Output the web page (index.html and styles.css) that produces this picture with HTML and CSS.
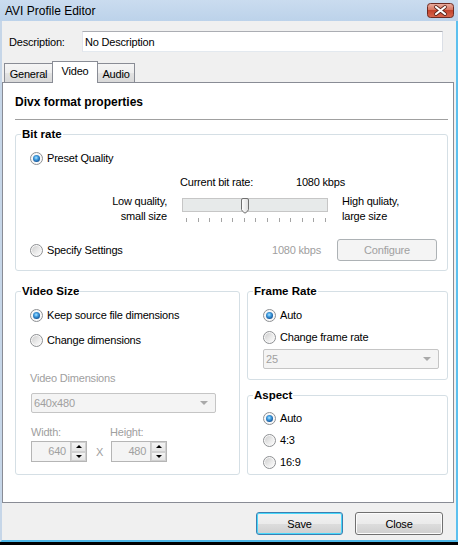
FILE: index.html
```html
<!DOCTYPE html>
<html>
<head>
<meta charset="utf-8">
<title>AVI Profile Editor</title>
<link rel="stylesheet" href="styles.css">
</head>
<body>
<div class="window">
  <div class="titlebar">
    <span class="title">AVI Profile Editor</span>
    <svg class="close-btn" width="27" height="15" viewBox="0 0 27 15">
      <defs>
        <linearGradient id="cg" x1="0" y1="0" x2="0" y2="1">
          <stop offset="0" stop-color="#eab0a3"/>
          <stop offset="0.45" stop-color="#d77661"/>
          <stop offset="0.5" stop-color="#c4432c"/>
          <stop offset="1" stop-color="#d9684f"/>
        </linearGradient>
      </defs>
      <rect x="0.5" y="0.5" width="26" height="14" rx="3" fill="url(#cg)" stroke="#6e2b22"/>
      <path d="M9 4 L18 11 M18 4 L9 11" stroke="#5a241b" stroke-width="3.8" stroke-linecap="round"/>
      <path d="M9 4 L18 11 M18 4 L9 11" stroke="#ffffff" stroke-width="2.2" stroke-linecap="round"/>
    </svg>
  </div>
  <div class="client">
    <div class="desc-row">
      <span class="desc-label">Description:</span>
      <div class="desc-input">No Description</div>
    </div>
    <div class="tabs">
      <div class="tab tab-general">General</div>
      <div class="tab tab-video active">Video</div>
      <div class="tab tab-audio">Audio</div>
    </div>
    <div class="panel">
      <div class="heading">Divx format properties</div>
      <div class="divider"></div>

      <div class="group bitrate">
        <span class="legend">Bit rate</span>
        <div class="radio-row"><span class="radio on"></span><span>Preset Quality</span></div>
        <div class="current-row"><span class="current-label">Current bit rate:</span><span>1080 kbps</span></div>
        <div class="slider-row">
          <div class="slider-left">Low quality,<br>small size</div>
          <div class="slider">
            <div class="track"></div>
            <svg class="thumb" width="8" height="16" viewBox="0 0 8 16">
              <defs>
                <linearGradient id="tg" x1="0" y1="0" x2="1" y2="0">
                  <stop offset="0" stop-color="#ffffff"/>
                  <stop offset="1" stop-color="#dcdcdc"/>
                </linearGradient>
              </defs>
              <path d="M0.5 2 Q0.5 0.5 2 0.5 H6 Q7.5 0.5 7.5 2 V11.5 Q7.5 13 4 15.2 Q0.5 13 0.5 11.5 Z" fill="url(#tg)" stroke="#707070"/>
            </svg>
            <div class="ticks">
              <i></i><i></i><i></i><i></i><i></i><i></i><i></i><i></i><i></i><i></i><i></i><i></i><i></i>
            </div>
          </div>
          <div class="slider-right">High quliaty,<br>large size</div>
        </div>
        <div class="specify-row">
          <span class="radio"></span><span class="radio-text">Specify Settings</span>
          <span class="kbps">1080 kbps</span>
          <div class="btn disabled configure">Configure</div>
        </div>
      </div>

      <div class="row2">
        <div class="group vsize">
          <span class="legend">Video Size</span>
          <div class="radio-row"><span class="radio on"></span><span>Keep source file dimensions</span></div>
          <div class="radio-row second"><span class="radio"></span><span>Change dimensions</span></div>
          <div class="gray-label vd-label">Video Dimensions</div>
          <div class="select vd-select"><span>640x480</span><span class="arrow"></span></div>
          <div class="wh-labels"><span class="w-label">Width:</span><span>Height:</span></div>
          <div class="spin-row">
            <div class="spin"><div class="spin-field">640</div><div class="spin-btns"><span class="up"></span><span class="down"></span></div></div>
            <span class="x-sep">X</span>
            <div class="spin"><div class="spin-field">480</div><div class="spin-btns"><span class="up"></span><span class="down"></span></div></div>
          </div>
        </div>
        <div class="col">
          <div class="group frate">
            <span class="legend">Frame Rate</span>
            <div class="radio-row"><span class="radio on"></span><span>Auto</span></div>
            <div class="radio-row fr-second"><span class="radio"></span><span>Change frame rate</span></div>
            <div class="select fr-select"><span>25</span><span class="arrow"></span></div>
          </div>
          <div class="group aspect">
            <span class="legend">Aspect</span>
            <div class="radio-row"><span class="radio on"></span><span>Auto</span></div>
            <div class="radio-row as-next"><span class="radio"></span><span>4:3</span></div>
            <div class="radio-row as-next"><span class="radio"></span><span>16:9</span></div>
          </div>
        </div>
      </div>
    </div>
    <div class="buttons">
      <div class="btn save">Save</div>
      <div class="btn close">Close</div>
    </div>
  </div>
</div>
</body>
</html>
```

FILE: styles.css
```css
* { box-sizing: border-box; }
html, body { margin: 0; padding: 0; background: #000; }
body {
  font-family: "Liberation Sans", Arial, sans-serif;
  font-size: 11px;
  letter-spacing: -0.2px;
  color: #000;
  width: 458px;
  height: 545px;
  overflow: hidden;
}
.window {
  width: 458px;
  height: 542px;
  display: flex;
  flex-direction: column;
  background: #f0f0f0;
}
.titlebar {
  height: 21px;
  flex: none;
  display: flex;
  align-items: center;
  justify-content: space-between;
  padding: 0 4px 0 5px;
  background: linear-gradient(#cadcef, #bcd2ea);
}
.title { font-size: 12px; letter-spacing: 0; color: #000; }
.close-btn { display: block; margin-top: -1px; }

.client {
  flex: 1;
  display: flex;
  flex-direction: column;
  border-left: 2px solid #c6d6e8;
  border-right: 2px solid #5cc0ee;
  border-bottom: 2px solid #4db7e7;
  padding-top: 10px;
}
.desc-row {
  display: flex;
  align-items: center;
  height: 21px;
  padding: 0 13px 0 7px;
}
.desc-label { width: 73px; }
.desc-input {
  flex: 1;
  height: 21px;
  background: #fff;
  border: 1px solid;
  border-color: #abadb3 #dbdfe6 #e3e9ef #e2e3ea;
  padding-left: 2px;
  display: flex;
  align-items: center;
}

.tabs {
  display: flex;
  align-items: flex-end;
  height: 21px;
  margin-top: 9px;
  padding-left: 2px;
  position: relative;
  z-index: 1;
}
.tab {
  height: 19px;
  border: 1px solid #898c95;
  border-bottom: none;
  background: linear-gradient(#f5f5f5 0%, #eeeeee 50%, #e3e3e3 51%, #d9d9d9 100%);
  display: flex;
  align-items: center;
  justify-content: center;
  padding-top: 2px;
}
.tab-general { width: 49px; }
.tab-video { width: 46px; margin-left: -1px; }
.tab-audio { width: 38px; margin-left: -1px; }
.tab.active {
  height: 22px;
  margin-bottom: -1px;
  background: #fff;
  padding-top: 0;
  padding-bottom: 3px;
  position: relative;
  z-index: 2;
}

.panel {
  height: 421px;
  margin-right: 2px;
  border: 1px solid #898c95;
  background: #fff;
  padding: 12px 5px 0 12px;
}
.heading {
  font-weight: bold;
  font-size: 12px;
  letter-spacing: 0;
  line-height: 14px;
  height: 14px;
}
.divider {
  margin-top: 10px;
  height: 1px;
  background: #a0a0a0;
}

.group {
  position: relative;
  border: 1px solid #d5dfe5;
  border-radius: 3px;
}
.legend {
  position: absolute;
  top: -8px;
  left: 5px;
  padding: 0 1px;
  background: #fff;
  font-weight: bold;
  font-size: 11.5px;
  letter-spacing: 0;
  line-height: 14px;
}

.radio-row {
  display: flex;
  align-items: center;
  height: 16px;
  gap: 4px;
}
.radio {
  position: relative;
  flex: none;
  width: 13px;
  height: 13px;
  border-radius: 50%;
  border: 1px solid #8e9093;
  background: #f8f8f8;
}
.radio::after {
  content: "";
  position: absolute;
  left: 1px; top: 1px; right: 1px; bottom: 1px;
  border-radius: 50%;
  background: linear-gradient(135deg, #cfcfcf 0%, #ececec 60%, #fbfbfb 100%);
}
.radio.on::after {
  left: 2px; top: 2px; right: 2px; bottom: 2px;
  background: radial-gradient(circle at 45% 40%, #b6e6ff 0, #4aa6e6 30%, #15599e 70%, #0f3e70 100%);
}

.bitrate {
  margin-top: 14px;
  padding: 15px 0 9px 14px;
}
.current-row {
  margin-top: 9px;
  margin-left: 150px;
  height: 14px;
  line-height: 14px;
  display: flex;
}
.current-label { width: 116px; }
.slider-row {
  margin-top: 5px;
  height: 30px;
  display: flex;
}
.slider-left {
  width: 137px;
  text-align: right;
  line-height: 15px;
}
.slider {
  position: relative;
  width: 146px;
  margin-left: 15px;
}
.track {
  margin-top: 4px;
  height: 14px;
  border: 1px solid #c6c6c6;
  background: #e7eaea;
}
.thumb {
  position: absolute;
  left: 59px;
  top: 4px;
}
.ticks {
  margin: 6px 2px 0 4px;
  height: 4px;
  display: flex;
  justify-content: space-between;
}
.ticks i {
  display: block;
  width: 1px;
  height: 4px;
  background: #a4a4a4;
}
.slider-right {
  margin-left: 14px;
  line-height: 15px;
}
.specify-row {
  margin-top: 15px;
  height: 22px;
  display: flex;
  align-items: center;
  padding-right: 10px;
}
.radio-text { margin-left: 4px; }
.kbps { margin-left: auto; color: #a0a0a0; }
.configure { width: 100px; height: 22px; margin-left: 16px; }

.btn {
  display: flex;
  align-items: center;
  justify-content: center;
  border: 1px solid #707070;
  border-radius: 3px;
  background: linear-gradient(#f2f2f2 0%, #ebebeb 50%, #dddddd 51%, #cfcfcf 100%);
  box-shadow: inset 0 0 0 1px #fcfcfc;
}
.btn.disabled {
  border-color: #adb2b5;
  background: #f4f4f4;
  box-shadow: none;
  color: #a0a0a0;
}

.row2 {
  margin-top: 20px;
  height: 184px;
  display: flex;
  gap: 7px;
}
.vsize {
  width: 225px;
  padding: 15px 0 0 14px;
}
.radio-row.second { margin-top: 9px; }
.gray-label { color: #a0a0a0; line-height: 14px; }
.vd-label { margin-top: 23px; }
.select {
  height: 20px;
  border: 1px solid #c5c5c5;
  border-radius: 2px;
  background: #f4f4f4;
  color: #a0a0a0;
  display: flex;
  align-items: center;
  justify-content: space-between;
  padding: 0 7px 0 2px;
}
.select .arrow {
  width: 0; height: 0;
  border-left: 4px solid transparent;
  border-right: 4px solid transparent;
  border-top: 4px solid #a9a9a9;
}
.vd-select { margin-top: 8px; margin-left: 1px; width: 185px; }
.wh-labels {
  margin-top: 12px;
  margin-left: 1px;
  line-height: 14px;
  color: #a0a0a0;
  display: flex;
}
.w-label { width: 79px; }
.spin-row {
  margin-top: 2px;
  margin-left: 1px;
  display: flex;
  align-items: center;
  height: 21px;
}
.spin {
  display: flex;
  width: 56px;
  height: 21px;
  border: 1px solid #b5b5b5;
  background: #f4f4f4;
}
.spin-field {
  flex: 1;
  color: #a0a0a0;
  text-align: right;
  padding-right: 4px;
  line-height: 19px;
}
.spin-btns {
  width: 16px;
  display: flex;
  flex-direction: column;
  border-left: 1px solid #c8c8c8;
}
.spin-btns span {
  flex: 1;
  display: flex;
  align-items: center;
  justify-content: center;
  background: linear-gradient(#f4f4f4, #e4e4e4);
  border: 1px solid #d0d0d0;
}
.spin-btns span::before {
  content: "";
  width: 0; height: 0;
  border-left: 3px solid transparent;
  border-right: 3px solid transparent;
}
.spin-btns .up::before { border-bottom: 3px solid #000; }
.spin-btns .down::before { border-top: 3px solid #000; }
.x-sep { color: #a0a0a0; margin: 0 8px 0 9px; }

.col {
  flex: 1;
  display: flex;
  flex-direction: column;
}
.frate {
  height: 89px;
  flex: none;
  padding: 15px 8px 0 15px;
}
.fr-second { margin-top: 6px; }
.fr-select { margin-top: 4px; }
.aspect {
  margin-top: 15px;
  flex: 1;
  padding: 14px 0 0 15px;
}
.as-next { margin-top: 6px; }

.buttons {
  margin-top: 9px;
  height: 23px;
  display: flex;
  justify-content: flex-end;
  gap: 12px;
  padding-right: 13px;
}
.save {
  width: 87px;
  border-color: #3c7fb1;
  box-shadow: inset 0 0 0 1px #48d8fb;
}
.close { width: 88px; }
```
